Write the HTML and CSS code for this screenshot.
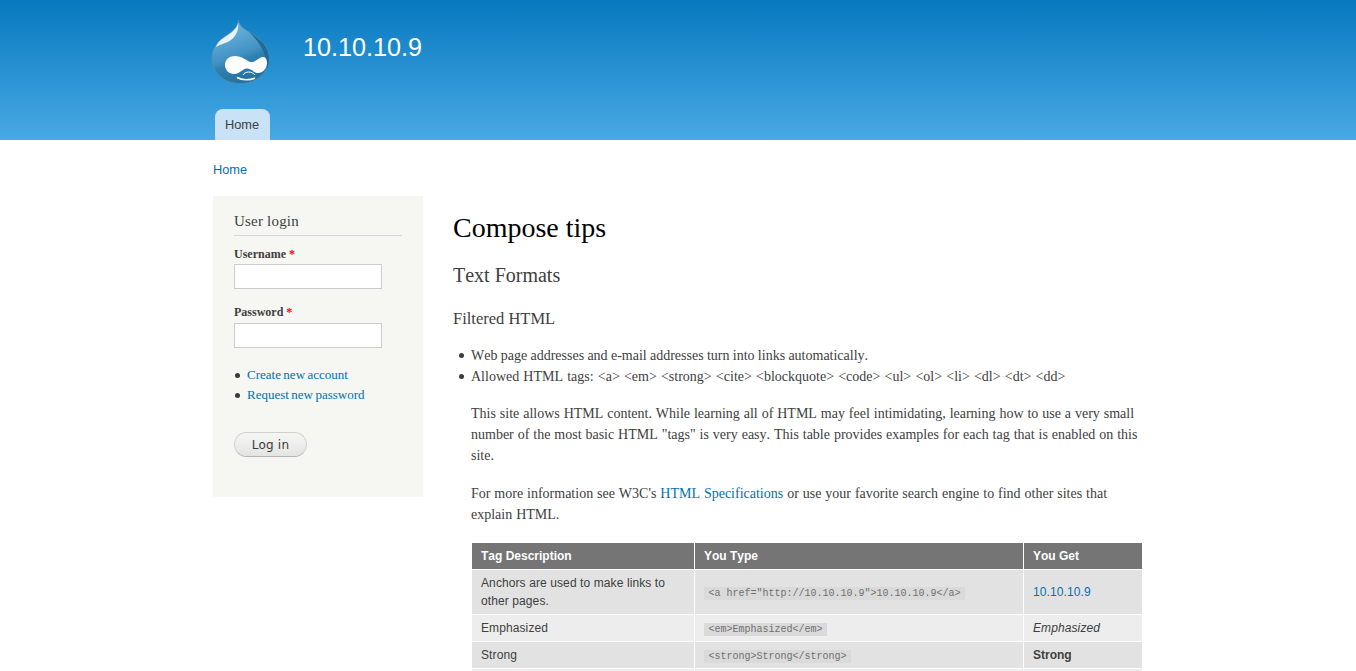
FILE: index.html
```html
<!doctype html>
<html lang="en">

<head>
    <meta charset="UTF-8">
    <meta name="viewport" content="width=device-width, initial-scale=1.0">
    <title>Compose tips | 10.10.10.9</title>
    <link rel="stylesheet" href="styles.css">
</head>

<body>
    <header class="site-header">
        <div class="header-inner">
            <div class="branding">
                <svg class="logo" width="60" height="66" viewBox="0 0 60 66">
                    <defs>
                        <linearGradient id="dropFill" x1="0.3" y1="0.1" x2="0.6" y2="1">
                            <stop offset="0" stop-color="#6db3dc" />
                            <stop offset="0.5" stop-color="#4292c4" />
                            <stop offset="0.62" stop-color="#2f80b0" />
                            <stop offset="1" stop-color="#256f9c" />
                        </linearGradient>
                    </defs>
                    <path d="M27.500 1C28 7 33 10 40 14C50 20 58 28 58 39C58 54 45 64.500 29 64.500C13 64.500 1 54 1 39C1 28 8 21 16 16C22 12 27 8 27.500 1Z" fill="url(#dropFill)" stroke="#5d8ea8" stroke-width="0.7" />
                    <path d="M38 13C50 20 58 28 58 40C58 44 57 47 56 50C56 36 50 24 38 13Z" fill="#1f6b99" />
                    <path d="M27 4C26 10 20 14 14 18C9 21 6 24 5 28C10 25 16 24 20 21C25 17 28 11 27 4Z" fill="#e8f3f9" />
                    <path d="M14 46C14 40 19 37 24 37C30 37 35 41 39 43C44 44 48 38 52 38C55 38 56 41 56 44C56 49 52 54 47 54C43 54 41 50 36.500 49.500C32 49 29 55 23 55C18 55 14 51 14 46Z" fill="#fff" />
                    <path d="M32 56C34 52 41 52 44 56" fill="none" stroke="#fff" stroke-width="1" />
                    <path d="M26 58.500C31 61.500 39 61.500 44 59" fill="none" stroke="#fff" stroke-width="1.600" />
                </svg>
                <div class="site-name">10.10.10.9</div>
            </div>
            <nav class="main-menu">
                <a class="menu-tab" href="#">Home</a>
            </nav>
        </div>
    </header>

    <div class="page">
        <div class="breadcrumb"><a href="#">Home</a></div>

        <div class="columns">
            <aside class="sidebar">
                <h2 class="block-title">User login</h2>
                <form class="login-form">
                    <label class="field-label" for="username">Username <span class="required">*</span></label>
                    <input class="field-input username-input" type="text" id="username">
                    <label class="field-label" for="password">Password <span class="required">*</span></label>
                    <input class="field-input password-input" type="password" id="password">
                    <ul class="login-links">
                        <li><a href="#">Create new account</a></li>
                        <li><a href="#">Request new password</a></li>
                    </ul>
                    <button class="login-button" type="button">Log in</button>
                </form>
            </aside>

            <main class="content">
                <h1 class="page-title">Compose tips</h1>
                <h2 class="section-title">Text Formats</h2>
                <h3 class="format-title">Filtered HTML</h3>
                <ul class="tips">
                    <li class="links-tip">Web page addresses and e-mail addresses turn into links automatically.</li>
                    <li class="tags-tip">Allowed HTML tags: &lt;a&gt; &lt;em&gt; &lt;strong&gt; &lt;cite&gt; &lt;blockquote&gt; &lt;code&gt; &lt;ul&gt; &lt;ol&gt; &lt;li&gt; &lt;dl&gt; &lt;dt&gt; &lt;dd&gt;</li>
                </ul>
                <div class="tip-body">
                    <p>This site allows HTML content. While learning all of HTML may feel intimidating, learning how to use a very small number of the most basic HTML "tags" is very easy. This table provides examples for each tag that is enabled on this site.</p>
                    <p>For more information see W3C's <a href="#">HTML Specifications</a> or use your favorite search engine to find other sites that explain HTML.</p>
                    <table class="tag-table">
                        <thead>
                            <tr>
                                <th class="col-desc">Tag Description</th>
                                <th class="col-type">You Type</th>
                                <th>You Get</th>
                            </tr>
                        </thead>
                        <tbody>
                            <tr>
                                <td>Anchors are used to make links to other pages.</td>
                                <td><code>&lt;a href="http://10.10.10.9"&gt;10.10.10.9&lt;/a&gt;</code></td>
                                <td><a href="#">10.10.10.9</a></td>
                            </tr>
                            <tr>
                                <td>Emphasized</td>
                                <td><code>&lt;em&gt;Emphasized&lt;/em&gt;</code></td>
                                <td><em>Emphasized</em></td>
                            </tr>
                            <tr>
                                <td>Strong</td>
                                <td><code>&lt;strong&gt;Strong&lt;/strong&gt;</code></td>
                                <td><strong>Strong</strong></td>
                            </tr>
                            <tr>
                                <td>Cited</td>
                                <td><code>&lt;cite&gt;Cited&lt;/cite&gt;</code></td>
                                <td><cite>Cited</cite></td>
                            </tr>
                        </tbody>
                    </table>
                </div>
            </main>
        </div>
    </div>
</body>

</html>
```

FILE: styles.css
```css
html,
body {
    height: 100%;
}

body {
    margin: 0;
    background-color: #fff;
    color: #404040;
    font-family: "Liberation Serif", serif;
    font-size: 14px;
    line-height: 21px;
    font-kerning: none;
    overflow: hidden;
}

a {
    color: #0071b3;
    text-decoration: none;
}

.site-header {
    height: 140px;
    background: linear-gradient(to bottom, #0779bf 0%, #48a9e4 100%);
}

.header-inner {
    width: 930px;
    height: 100%;
    margin: 0 auto;
    display: flex;
    flex-direction: column;
    justify-content: space-between;
}

.branding {
    display: flex;
    align-items: flex-start;
    padding-top: 19px;
}

.logo {
    margin-left: -2px;
    flex-shrink: 0;
}

.site-name {
    margin: 10px 0 0 32px;
    color: #fff;
    font-family: "Liberation Sans", sans-serif;
    font-size: 25.200px;
    line-height: 36px;
}

.main-menu {
    display: flex;
    padding-left: 2px;
}

.menu-tab {
    display: block;
    width: 55px;
    height: 31px;
    box-sizing: border-box;
    padding: 0 10px;
    border-radius: 8px 8px 0 0;
    background-color: #c9e2f5;
    color: #404040;
    font-family: "Liberation Sans", sans-serif;
    font-size: 12.800px;
    line-height: 31px;
}

.page {
    width: 930px;
    margin: 0 auto;
}

.breadcrumb {
    height: 56px;
    padding-top: 19px;
    box-sizing: border-box;
    font-family: "Liberation Sans", sans-serif;
    font-size: 12.800px;
    line-height: 21px;
}

.columns {
    display: flex;
    align-items: flex-start;
    gap: 30px;
}

.sidebar {
    width: 210px;
    height: 301px;
    flex-shrink: 0;
    box-sizing: border-box;
    padding: 15px 21px 0;
    background-color: #f6f6f2;
}

.block-title {
    margin: 0 0 8px;
    padding-bottom: 4px;
    border-bottom: 1px solid #d6d6d6;
    font-size: 15px;
    font-weight: normal;
    line-height: 20px;
    letter-spacing: 0.2px;
}

.login-form {
    display: flex;
    flex-direction: column;
    align-items: flex-start;
}

.field-label {
    font-size: 12px;
    font-weight: bold;
    line-height: 20px;
}

.required {
    color: #f00;
}

.field-input {
    width: 148px;
    height: 25px;
    box-sizing: border-box;
    margin: 0;
    padding: 2px;
    border: 1px solid #ccc;
    background-color: #fff;
}

.username-input {
    margin-bottom: 13px;
}

.password-input {
    margin-top: 1px;
}

.login-links {
    margin: 17px 0 0;
    padding: 0;
    list-style: none;
    font-size: 13px;
    line-height: 20px;
    word-spacing: -0.800px;
}

.login-links li {
    display: flex;
    align-items: center;
    gap: 7px;
}

.login-links li::before {
    content: "";
    width: 5px;
    height: 5px;
    margin-left: 1px;
    border-radius: 50%;
    background-color: #3b3b3b;
}

.login-button {
    width: 73px;
    height: 25px;
    margin-top: 27px;
    padding: 1px 0 0;
    border: 1px solid #d0d0d0;
    border-bottom-color: #b4b4b4;
    border-radius: 15px;
    background: linear-gradient(to bottom, #f6f6f4 0%, #e4e4e2 100%);
    color: #3a3a3a;
    font-family: "DejaVu Sans", sans-serif;
    font-size: 12px;
    letter-spacing: 0.2px;
    line-height: 22px;
}

.content {
    flex: 1;
    min-width: 0;
}

.page-title {
    margin: 14px 0 0;
    color: #000;
    font-size: 28px;
    font-weight: normal;
    line-height: 36px;
}

.section-title {
    margin: 16px 0 0;
    font-size: 20px;
    font-weight: normal;
    line-height: 26px;
}

.format-title {
    margin: 19px 0 0;
    font-size: 16.500px;
    font-weight: normal;
    line-height: 24px;
}

.tips {
    margin: 14px 0 0;
    padding: 0;
    list-style: none;
}

.tips li {
    display: flex;
    align-items: center;
    gap: 7px;
    padding-left: 6px;
}

.tips li::before {
    content: "";
    flex-shrink: 0;
    width: 5px;
    height: 5px;
    border-radius: 50%;
    background-color: #3b3b3b;
}

.links-tip {
    word-spacing: -0.200px;
}

.tags-tip {
    word-spacing: 0.650px;
}

.tip-body {
    padding-left: 18px;
}

.tip-body p {
    margin: 17px 0 0;
    word-spacing: 0.420px;
}

.tip-body p:first-child {
    margin-top: 16px;
}

.tag-table {
    width: 672px;
    margin-top: 17px;
    border-collapse: collapse;
    table-layout: fixed;
    font-family: "Liberation Sans", sans-serif;
    font-size: 12px;
    line-height: 18px;
}

.col-desc {
    width: 223px;
}

.col-type {
    width: 329px;
}

.tag-table th,
.tag-table td {
    box-sizing: border-box;
    padding: 4px 9px;
    border: 1px solid #fff;
    text-align: left;
}

.tag-table th {
    background-color: #757575;
    color: #fff;
    font-weight: bold;
}

.tag-table td {
    background-color: #e2e2e2;
    letter-spacing: 0.1px;
}

.tag-table td strong {
    letter-spacing: 0;
}

.tag-table tbody tr:nth-child(even) td {
    background-color: #ededed;
}

.tag-table code {
    padding: 1px 4.500px;
    background-color: #dadada;
    color: #707070;
    font-family: "Liberation Mono", monospace;
    font-size: 10px;
    line-height: 1;
    letter-spacing: 0;
}
```
